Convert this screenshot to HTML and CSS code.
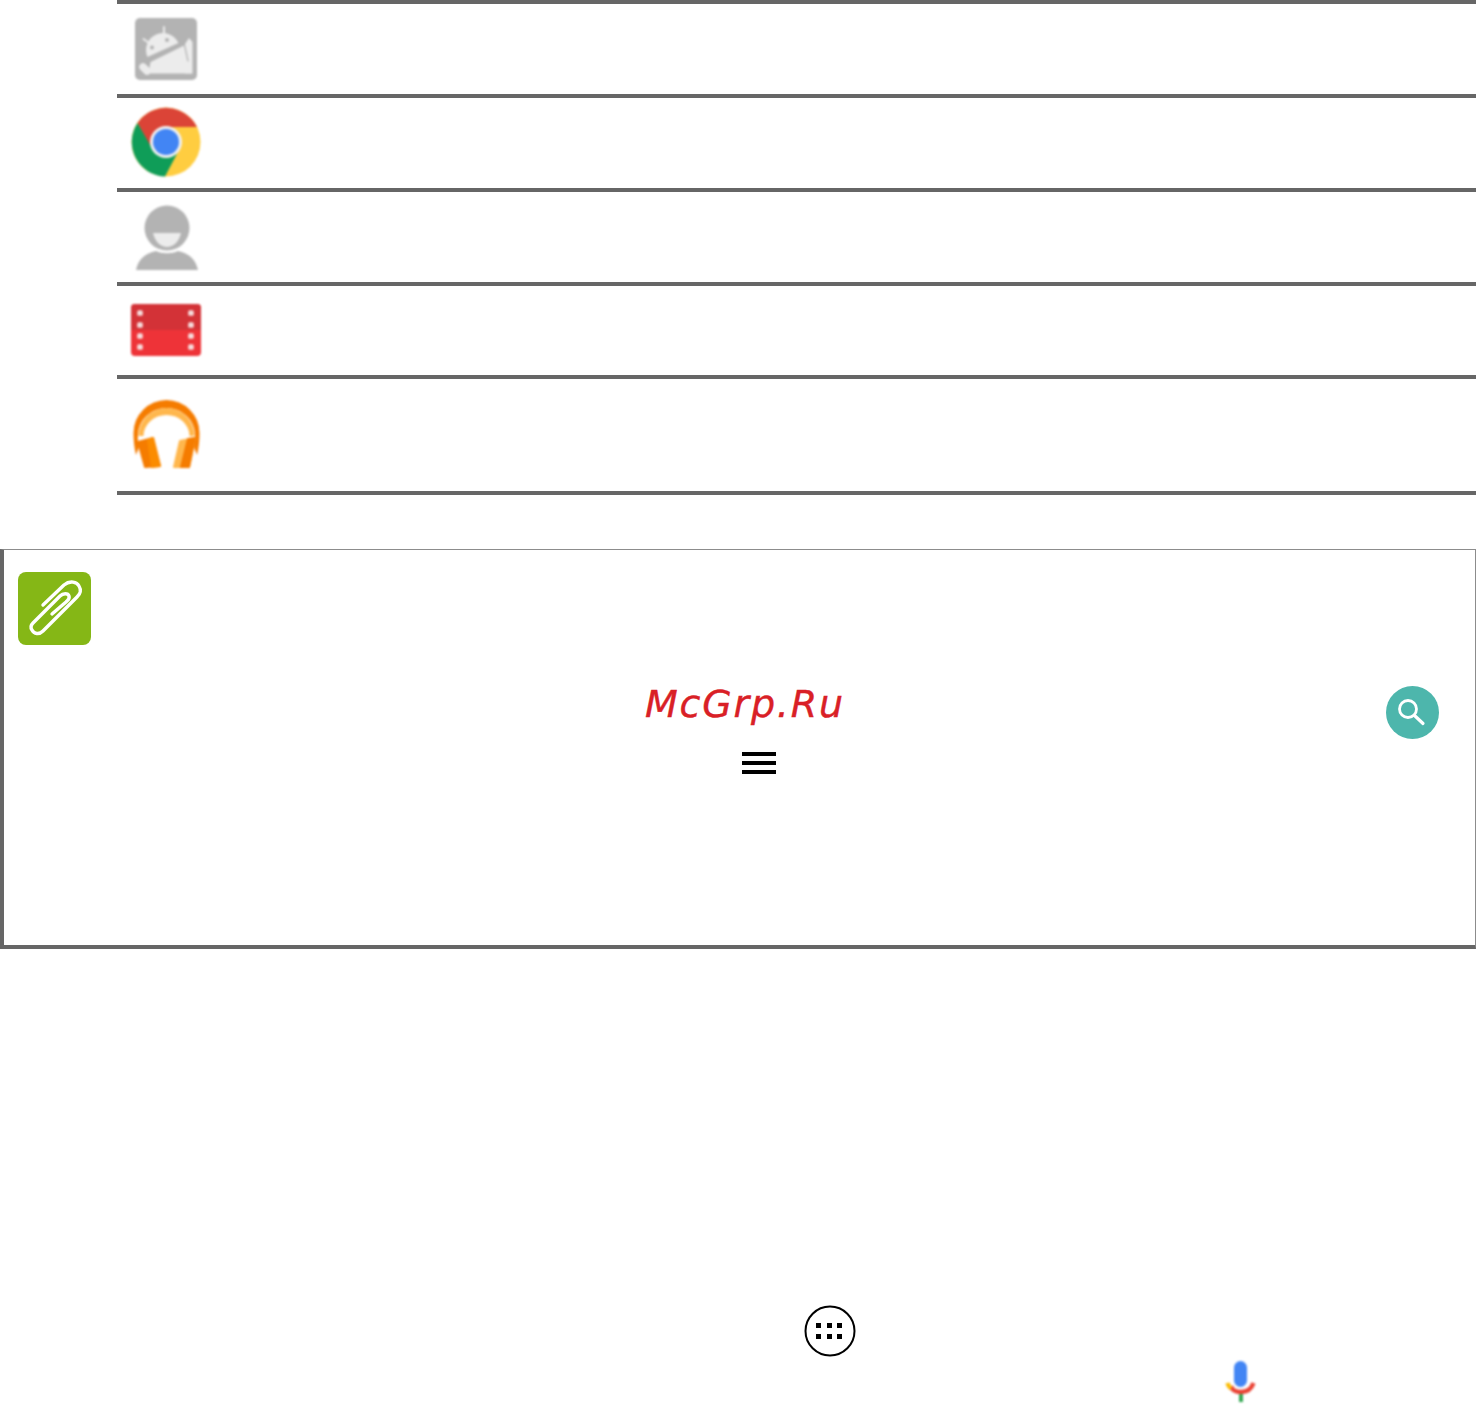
FILE: index.html
```html
<!DOCTYPE html>
<html lang="ru">
<head>
<meta charset="utf-8">
<title>McGrp.Ru</title>
<link rel="stylesheet" href="styles.css">
</head>
<body>
<main class="page">
  <section class="app-table">
    <div class="app-row">
      <svg class="icon soft" width="62" height="62" viewBox="0 0 62 62">
        <rect width="62" height="62" rx="5" fill="#b3b3b3"/>
        <g fill="#ececec">
          <path d="M-17 0A17 17 0 0 1 17 0Z" transform="translate(28 32) rotate(-24)"/>
          <path d="M15.500 44L50 27L57 55.500H13.500Z"/>
          <path d="M50 26L54 20L57.500 24V55.500H50Z"/>
        </g>
        <g stroke-linecap="round" fill="none">
          <path d="M29 9V16M8.500 21L14 25" stroke="#ececec" stroke-width="2"/>
          <path d="M8 49L12 53" stroke="#ececec" stroke-width="7.500"/>
          <path d="M49.500 27L53 43" stroke="#b3b3b3" stroke-width="1.200"/>
        </g>
        <circle cx="17" cy="29.500" r="2" fill="#b3b3b3"/>
        <circle cx="32" cy="22" r="2" fill="#b3b3b3"/>
      </svg>
    </div>
    <div class="app-row">
      <svg class="icon icon-up soft" width="70" height="70" viewBox="0 0 70 70">
        <circle cx="35" cy="35" r="34.500" fill="#ffcd40"/>
        <path d="M6.500 16A34.500 34.500 0 0 1 66 20H35L20 42Z" fill="#db4437"/>
        <path d="M6.500 16A34.500 34.500 0 0 0 34 69.500L48 43H22Z" fill="#0f9d58"/>
        <circle cx="35" cy="35" r="16" fill="#f1f1f1"/>
        <circle cx="35" cy="35" r="13" fill="#4285f4"/>
      </svg>
    </div>
    <div class="app-row">
      <svg class="icon icon-nudge soft" width="64" height="66" viewBox="0 0 64 66">
        <circle cx="32" cy="23" r="22.500" fill="#b3b3b3"/>
        <path d="M18 28H46C44 37 38 42 32 42C26 42 20 37 18 28Z" fill="#ececec"/>
        <path d="M1 65C3 55 10 48 21 46C27 49 37 49 43 46C54 48 61 55 63 65Z" fill="#b3b3b3"/>
      </svg>
    </div>
    <div class="app-row row-short">
      <svg class="icon icon-up soft" width="70" height="52" viewBox="0 0 70 52">
        <rect width="70" height="52" rx="4" fill="#ee3338"/>
        <path d="M0 26V4A4 4 0 0 1 4 0H66A4 4 0 0 1 70 4V26Z" fill="#d33237"/>
        <g fill="#f6dcdc">
          <rect x="6.200" y="6.200" width="5.600" height="5.600" rx="1.500"/><rect x="6.200" y="18.200" width="5.600" height="5.600" rx="1.500"/>
          <rect x="6.200" y="29.200" width="5.600" height="5.600" rx="1.500"/><rect x="6.200" y="40.200" width="5.600" height="5.600" rx="1.500"/>
          <rect x="57.200" y="6.200" width="5.600" height="5.600" rx="1.500"/><rect x="57.200" y="18.200" width="5.600" height="5.600" rx="1.500"/>
          <rect x="57.200" y="29.200" width="5.600" height="5.600" rx="1.500"/><rect x="57.200" y="40.200" width="5.600" height="5.600" rx="1.500"/>
        </g>
      </svg>
    </div>
    <div class="app-row row-tall">
      <svg class="icon icon-phones soft" width="74" height="74" viewBox="0 0 74 74">
        <path d="M6 58C4 50 3.500 42 3.500 36A33 33 0 0 1 69.500 36C69.500 42 69 50 67 58L64 50C65 45 65.500 42 65 38A28.500 27 0 0 0 8 38C7.500 42 8 45 9 50Z" fill="#f57c00"/>
        <path d="M8.500 39A28 28 0 0 1 64.500 39L59.500 39A23 21 0 0 0 13.500 39Z" fill="#ffb74d"/>
        <g stroke-width="2" stroke-linejoin="round">
          <path d="M8 45L23 41L30 69L15 70Z" fill="#f57c00" stroke="#f57c00"/>
          <path d="M18 43L23 41L30 69L22 70Z" fill="#fb8c00" stroke="#fb8c00"/>
          <path d="M50 44L65 41L59 70H44Z" fill="#ffb74d" stroke="#ffb74d"/>
          <path d="M58 42L65 41L59 70H51Z" fill="#f57c00" stroke="#f57c00"/>
        </g>
      </svg>
    </div>
  </section>

  <section class="note">
    <div class="note-badge">
      <svg width="73" height="73" viewBox="0 0 73 73">
        <path d="M25 33L46 13C52 8 59 10 61 14C64 19 62 22 59 25L25 59C21 63 16 62 14 58C12 55 13 53 15 51L42 24C45 21 50 21 51 24C52 27 50 28 48 30L34 42" fill="none" stroke="#fff" stroke-width="3.400" stroke-linecap="round" stroke-linejoin="round"/>
      </svg>
    </div>
    <p class="watermark">McGrp.Ru</p>
    <div class="menu-glyph"><span></span><span></span><span></span></div>
    <svg class="search-badge" width="53" height="53" viewBox="0 0 53 53">
      <circle cx="26.500" cy="26.500" r="26.500" fill="#4db6ac"/>
      <circle cx="22" cy="23" r="8.500" fill="none" stroke="#fff" stroke-width="2.800"/>
      <path d="M28.500 29.500L37 37.500" stroke="#fff" stroke-width="3.200" stroke-linecap="round"/>
    </svg>
  </section>

  <svg class="apps-glyph" width="52" height="52" viewBox="0 0 52 52">
    <circle cx="26" cy="26" r="24.500" fill="#fff" stroke="#000" stroke-width="2"/>
    <g fill="#000">
      <rect x="12" y="18" width="5" height="5"/><rect x="23" y="18" width="5" height="5"/><rect x="33" y="18" width="5" height="5"/>
      <rect x="12" y="29" width="5" height="5"/><rect x="23" y="29" width="5" height="5"/><rect x="33" y="29" width="5" height="5"/>
    </g>
  </svg>

  <svg class="mic-glyph soft" width="32" height="43" viewBox="0 0 32 43">
    <rect x="9" y="1" width="13" height="26" rx="6.500" fill="#4285f4"/>
    <path d="M14 33H18V42H14Z" fill="#34a853"/>
    <path d="M6 26C7 30 11 32 16 32C21 32 26 30 28.500 23" fill="none" stroke="#ea4335" stroke-width="4.400"/>
    <path d="M2.500 23C3 25 4 27 6 28.500" fill="none" stroke="#fbbc05" stroke-width="4.400"/>
  </svg>
</main>
</body>
</html>
```
FILE: styles.css
```css
html, body {
  margin: 0;
  padding: 0;
  background: #fff;
}

.page {
  position: relative;
  height: 1405px;
  overflow: hidden;
}

.app-table {
  margin-left: 117px;
  border-top: 4px solid #666;
}

.app-row {
  display: flex;
  align-items: center;
  height: 90px;
  border-bottom: 4px solid #666;
}

.row-short { height: 89px; }
.row-tall { height: 112px; }

.icon {
  display: block;
  margin-left: 49px;
  transform: translateX(-50%);
}

.icon-up { margin-bottom: 2px; }
.icon-nudge { margin-left: 50px; margin-top: 2px; }
.icon-phones { margin-left: 50px; margin-bottom: 2px; }

.soft { filter: blur(0.8px); }

.note {
  position: relative;
  box-sizing: border-box;
  height: 400px;
  margin-top: 54px;
  padding: 22px 0 0 14px;
  border-style: solid;
  border-color: #8c8c8c #8c8c8c #666 #666;
  border-width: 1px 1px 4px 4px;
}

.note-badge {
  width: 73px;
  height: 73px;
  border-radius: 8px;
  background: #85b716;
}

.note-badge svg { display: block; }

.watermark {
  position: absolute;
  left: 641px;
  top: 129px;
  margin: 0;
  font: italic 38px/50px "DejaVu Sans", sans-serif;
  letter-spacing: 1.8px;
  color: #d92026;
  -webkit-text-stroke: 0.4px #d92026;
  white-space: nowrap;
}

.menu-glyph {
  position: absolute;
  left: 738px;
  top: 202px;
  display: flex;
  flex-direction: column;
  gap: 5px;
  width: 34px;
}

.menu-glyph span {
  height: 4px;
  background: #000;
}

.search-badge {
  position: absolute;
  left: 1382px;
  top: 136px;
}

.apps-glyph {
  position: absolute;
  left: 804px;
  top: 1305px;
}

.mic-glyph {
  position: absolute;
  left: 1225px;
  top: 1360px;
}
```
